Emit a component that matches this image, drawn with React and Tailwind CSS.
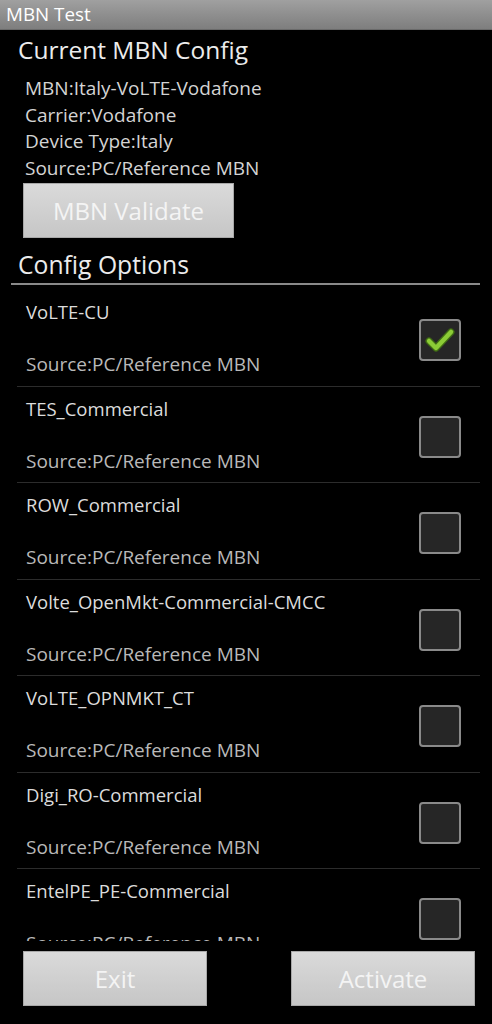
import React, { useState } from 'react';

const configs = [
  { name: 'VoLTE-CU', checked: true },
  { name: 'TES_Commercial' },
  { name: 'ROW_Commercial' },
  { name: 'Volte_OpenMkt-Commercial-CMCC' },
  { name: 'VoLTE_OPNMKT_CT' },
  { name: 'Digi_RO-Commercial' },
  { name: 'EntelPE_PE-Commercial' },
];

function CheckBox({ checked, onClick }) {
  return (
    <button
      onClick={onClick}
      className="w-[42px] h-[42px] rounded-[4px] border-2 border-[#8a8a8a] bg-[#262626] flex items-center justify-center"
    >
      {checked && (
        <svg width="30" height="26" viewBox="0 0 30 26">
          <polyline points="4,14 11,21 26,5" fill="none" stroke="#3f6b14" strokeWidth="7" strokeLinecap="round" strokeLinejoin="round" />
          <polyline points="4,14 11,21 26,5" fill="none" stroke="#8ccc36" strokeWidth="4.5" strokeLinecap="round" strokeLinejoin="round" />
        </svg>
      )}
    </button>
  );
}

function GrayButton({ children, className = '' }) {
  return (
    <button
      className={`h-[55px] bg-gradient-to-b from-[#dadada] to-[#c6c6c6] border border-[#a8a8a8] text-[#f4f4f4] text-[24px] ${className}`}
    >
      {children}
    </button>
  );
}

export default function App() {
  const [checked, setChecked] = useState(configs.map(c => !!c.checked));

  return (
    <div className="w-[492px] h-[1024px] bg-black overflow-hidden" style={{ fontFamily: '"Open Sans", "Noto Sans", sans-serif' }}>
      <div className="h-[30px] bg-gradient-to-b from-[#a0a0a0] to-[#7e7e7e] border-b border-[#6a6a6a] px-[6px] text-white text-[18.8px] leading-[29px]">
        MBN Test
      </div>

      <div className="pl-[18px] h-[40px] leading-[40px] text-[24.5px] text-[#ececec]">Current MBN Config</div>
      <div className="pl-[25px] mt-[5px] text-[19px] text-[#d4d4d4]">
        <div className="leading-[26.5px]">MBN:Italy-VoLTE-Vodafone</div>
        <div className="leading-[26.5px]">Carrier:Vodafone</div>
        <div className="leading-[26.5px]">Device Type:Italy</div>
        <div className="leading-[26.5px]">Source:PC/Reference MBN</div>
      </div>
      <div className="pl-[23px] mt-[2px]">
        <GrayButton className="w-[211px]">MBN Validate</GrayButton>
      </div>

      <div className="pl-[18px] mt-[9px] h-[36px] leading-[36px] text-[24.7px] text-[#ececec]">Config Options</div>
      <div className="mx-[11px] mr-[12px] h-[2px] bg-[#8a8a8a]" />

      <div className="h-[656px] overflow-hidden pt-[5px]">
        {configs.map((c, i) => (
          <div key={c.name} className="ml-[17px] mr-[12px] h-[96.5px] border-b border-[#2c2c2c] flex items-start justify-between">
            <div className="pl-[9px] pt-[10px]">
              <div className="text-[18.5px] leading-[24px] text-[#dcdcdc]">{c.name}</div>
              <div className="mt-[28px] text-[19px] leading-[24px] text-[#b9b9b9]">Source:PC/Reference MBN</div>
            </div>
            <div className="pt-[29px] pr-[19px]">
              <CheckBox
                checked={checked[i]}
                onClick={() => setChecked(checked.map((v, j) => (j === i ? !v : v)))}
              />
            </div>
          </div>
        ))}
      </div>

      <div className="mt-[10px] flex justify-between pl-[23px] pr-[17px]">
        <GrayButton className="w-[184px]">Exit</GrayButton>
        <GrayButton className="w-[184px]">Activate</GrayButton>
      </div>
    </div>
  );
}
